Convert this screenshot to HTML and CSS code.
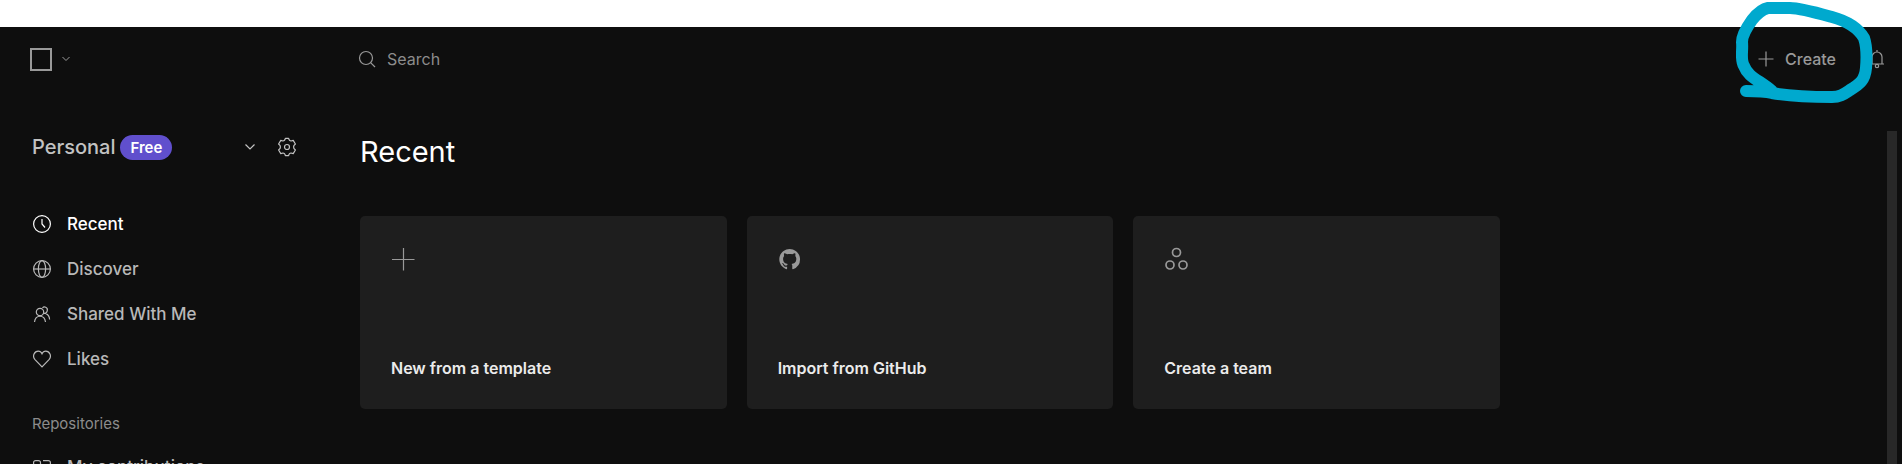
FILE: index.html
```html
<!DOCTYPE html>
<html lang="en">
<head>
  <meta charset="UTF-8">
  <meta name="viewport" content="width=device-width, initial-scale=1">
  <title>Recent</title>
  <link rel="stylesheet" href="styles.css">
</head>
<body>

  <div class="app">
    <header class="topbar">
      <div class="topbar-left">
        <button type="button" class="logo-btn" aria-label="Menu">
          <span class="logo"></span>
          <svg class="thin" width="8" height="6" viewBox="0 0 8 6"><path d="M0.5 1 L4 4.5 L7.5 1"/></svg>
        </button>
      </div>
      <label class="search">
        <svg width="18" height="18" viewBox="0 0 18 18"><circle cx="8" cy="8" r="6.5"/><path d="M12.6 12.6 L17 17"/></svg>
        <input type="search" placeholder="Search" aria-label="Search">
      </label>
      <div class="topbar-actions">
        <button type="button" class="create-btn">
          <svg width="16" height="16" viewBox="0 0 16 16"><path d="M8 0.5 V15.5 M0.5 8 H15.5"/></svg>
          Create
        </button>
        <button type="button" class="bell-btn" aria-label="Notifications">
          <svg width="16" height="20" viewBox="0 0 16 20"><path d="M8 1 V3 M1 15 H15 M3 15 V8 A5 5 0 0 1 13 8 V15"/><circle cx="8" cy="17" r="1.7"/></svg>
        </button>
        <svg class="marker" width="140" height="106" viewBox="0 0 140 106">
          <path d="M10 91 C20 91 28 91 36 93 C58 97 82 97 96 97 C104 97 108 94 114 90 C124 84 129 80 130 68 C131 56 131 47 128 38 C121 26 107 20 96 17 C78 12 64 8 54 8 L32 8 C26 9 20 15 16 20 C11 27 6 35 6 42 C7 50 4 60 8 66 C12 77 23 80 36 91"/>
        </svg>
      </div>
    </header>

    <div class="workspace">
      <aside class="sidebar">
        <div class="account">
          <button type="button" class="account-btn">
            <span>Personal</span>
            <span class="badge">Free</span>
            <svg width="12" height="8" viewBox="0 0 12 8"><path d="M1.5 1.5 L6 6 L10.5 1.5"/></svg>
          </button>
          <button type="button" class="settings-btn" aria-label="Settings">
            <svg width="20" height="20" viewBox="0 0 20 20"><path stroke-linejoin="round" d="M8.4 1.4 H11.6 Q12.2 4 14 4 L16.2 3.4 L18.4 7 Q16.4 8.6 16.6 10 Q16.4 11.4 18.4 13 L16.2 16.6 L14 16 Q12.2 16 11.6 18.6 H8.4 Q7.8 16 6 16 L3.8 16.6 L1.6 13 Q3.6 11.4 3.4 10 Q3.6 8.6 1.6 7 L3.8 3.4 L6 4 Q7.8 4 8.4 1.4 Z"/><circle cx="10" cy="10" r="2.5"/></svg>
          </button>
        </div>

        <nav class="nav">
          <a href="#" class="nav-link active">
            <svg width="18" height="18" viewBox="0 0 18 18"><circle cx="9" cy="9" r="8.4"/><path d="M9 4 V9 L12 12.5"/></svg>
            Recent
          </a>
          <a href="#" class="nav-link">
            <svg width="18" height="18" viewBox="0 0 18 18"><circle cx="9" cy="9" r="8.4"/><ellipse cx="9" cy="9" rx="3.6" ry="8.4"/><path d="M0.6 9 H17.4"/></svg>
            Discover
          </a>
          <a href="#" class="nav-link">
            <svg width="18" height="18" viewBox="0 0 18 18"><circle cx="7" cy="7" r="3.7"/><path d="M1.5 17 C2.5 9.3 11.5 9.3 12.5 17 M9.5 3 C11 1 15 2.2 14.3 5.5 C14 7.5 12.5 8.5 11 8.3 M12.8 8.6 C15 9.5 16.5 11.5 16.6 14.5"/></svg>
            Shared With Me
          </a>
          <a href="#" class="nav-link">
            <svg width="18" height="18" viewBox="0 0 18 18"><path d="M9 16.8 L2 9.6 C-1.2 6 1.6 1.2 5.2 1.2 C7 1.2 8.3 2.2 9 3.8 C9.7 2.2 11 1.2 12.8 1.2 C16.4 1.2 19.2 6 16 9.6 Z"/></svg>
            Likes
          </a>
        </nav>

        <h2 class="nav-title">Repositories</h2>
        <nav class="nav">
          <a href="#" class="nav-link">
            <svg width="18" height="14" viewBox="0 0 18 14"><path d="M7.5 4 V2.6 A2 2 0 0 0 5.5 0.6 H2.6 A2 2 0 0 0 0.6 2.6 V11.4 A2 2 0 0 0 2.6 13.4 H15.4 A2 2 0 0 0 17.4 11.4 V2.6 A2 2 0 0 0 15.4 0.6 H10"/></svg>
            My contributions
          </a>
        </nav>
      </aside>

      <main class="content">
        <h1>Recent</h1>
        <div class="cards">
          <button type="button" class="card">
            <svg width="24" height="24" viewBox="0 0 24 24"><path d="M12.5 1 V23.5 M1 12.5 H23.5"/></svg>
            <span>New from a template</span>
          </button>
          <button type="button" class="card">
            <svg class="filled" width="24" height="24" viewBox="-1 -1.5 18.5 18.5"><path d="M8 0C3.58 0 0 3.58 0 8c0 3.54 2.29 6.53 5.47 7.59.4.07.55-.17.55-.38 0-.19-.01-.82-.01-1.49-2.01.37-2.53-.49-2.69-.94-.09-.23-.48-.94-.82-1.13-.28-.15-.68-.52-.01-.53.63-.01 1.08.58 1.23.82.72 1.21 1.87.87 2.33.66.07-.52.28-.87.51-1.07-1.78-.2-3.64-.89-3.64-3.95 0-.87.31-1.59.82-2.15-.08-.2-.36-1.02.08-2.12 0 0 .67-.21 2.2.82.64-.18 1.32-.27 2-.27s1.36.09 2 .27c1.53-1.04 2.2-.82 2.2-.82.44 1.1.16 1.92.08 2.12.51.56.82 1.27.82 2.15 0 3.07-1.87 3.75-3.65 3.95.29.25.54.73.54 1.48 0 1.07-.01 1.93-.01 2.2 0 .21.15.46.55.38A8.01 8.01 0 0 0 16 8c0-4.42-3.58-8-8-8z"/></svg>
            <span>Import from GitHub</span>
          </button>
          <button type="button" class="card">
            <svg class="bold" width="24" height="24" viewBox="0 0 24 24"><circle cx="12.5" cy="5.5" r="4"/><circle cx="6" cy="18" r="4"/><circle cx="19" cy="18" r="4"/></svg>
            <span>Create a team</span>
          </button>
        </div>
      </main>

      <div class="scroll-track"></div>
    </div>
  </div>

</body>
</html>
```

FILE: styles.css
```css
* {
  box-sizing: border-box;
}

body {
  margin: 0;
  padding-top: 27px;
  height: 100vh;
  overflow: hidden;
  background: #fff;
  color: #c2c2c2;
  font-family: Inter, "Liberation Sans", sans-serif;
  font-size: 16px;
}

button {
  padding: 0;
  border: none;
  background: none;
  color: inherit;
  font: inherit;
  cursor: pointer;
}

svg {
  flex-shrink: 0;
  fill: none;
  stroke: currentColor;
  stroke-width: 1.2;
}

.thin {
  stroke-width: 1;
}

.app {
  display: flex;
  flex-direction: column;
  height: 100%;
  background: #0e0e0e;
}

/* Top bar */
.topbar {
  display: flex;
  align-items: center;
  height: 64px;
  padding-right: 17px;
  color: #999;
}

.topbar-left {
  width: 358px;
  padding-left: 30px;
}

.logo-btn {
  display: flex;
  align-items: center;
  gap: 10px;
}

.logo {
  width: 22px;
  height: 23px;
  border: 2px solid #999;
}

.search {
  display: flex;
  flex: 1;
  align-items: center;
  gap: 11px;
}

.search input {
  width: 100%;
  padding: 0;
  border: none;
  outline: none;
  background: none;
  color: #fff;
  font: inherit;
}

.search input::placeholder {
  color: #8c8c8c;
  opacity: 1;
}

.topbar-actions {
  position: relative;
  display: flex;
  align-items: center;
  gap: 33px;
}

.create-btn {
  display: flex;
  align-items: center;
  gap: 11px;
  font-weight: 500;
}

.bell-btn {
  display: flex;
}

/* Hand drawn highlight around the create button */
.marker {
  position: absolute;
  top: -49px;
  right: 9px;
  stroke: #00a9ce;
  stroke-width: 12;
  stroke-linecap: round;
  stroke-linejoin: round;
  pointer-events: none;
}

/* Page */
.workspace {
  display: flex;
  flex: 1;
  min-height: 0;
  padding-right: 5px;
  overflow: hidden;
}

.sidebar {
  flex-shrink: 0;
  width: 360px;
  padding: 40px 64px 0 32px;
}

.account {
  display: flex;
  align-items: center;
  gap: 21px;
  height: 32px;
  margin-bottom: 38px;
}

.account-btn {
  display: flex;
  flex: 1;
  align-items: center;
  gap: 5px;
  font-size: 20px;
  font-weight: 500;
}

.account-btn svg {
  margin-left: auto;
}

.settings-btn {
  display: flex;
  margin-right: -1px;
}

.badge {
  padding: 0 10px;
  border-radius: 13px;
  background: #604fcd;
  color: #fff;
  font-size: 15px;
  font-weight: 600;
  line-height: 25px;
}

.nav-link {
  display: flex;
  align-items: center;
  gap: 16px;
  height: 45px;
  padding-left: 1px;
  color: #b8b8b8;
  font-size: 17px;
  font-weight: 500;
  text-decoration: none;
}

.nav-link.active {
  color: #fff;
}

.nav-title {
  margin: 33px 0 10px;
  color: #8c8c8c;
  font-size: 15px;
  font-weight: 400;
  line-height: 20px;
}

.content {
  flex: 1;
  padding-top: 43px;
}

h1 {
  margin: 0 0 46px;
  color: #fff;
  font-size: 29px;
  font-weight: 400;
  line-height: 36px;
}

.cards {
  display: grid;
  grid-template-columns: repeat(3, 1fr);
  gap: 20px;
  max-width: 1140px;
}

.card {
  display: flex;
  flex-direction: column;
  align-items: flex-start;
  gap: 87px;
  padding: 31px 31px 30px;
  border-radius: 5px;
  background: #1e1e1e;
  color: #999;
}

.card span {
  color: #ebebeb;
  font-weight: 600;
  line-height: 21px;
}

.card .filled {
  fill: currentColor;
  stroke: none;
}

.card .bold {
  stroke-width: 1.7;
}

.scroll-track {
  width: 10px;
  margin-top: 40px;
  background: #282828;
}
```
